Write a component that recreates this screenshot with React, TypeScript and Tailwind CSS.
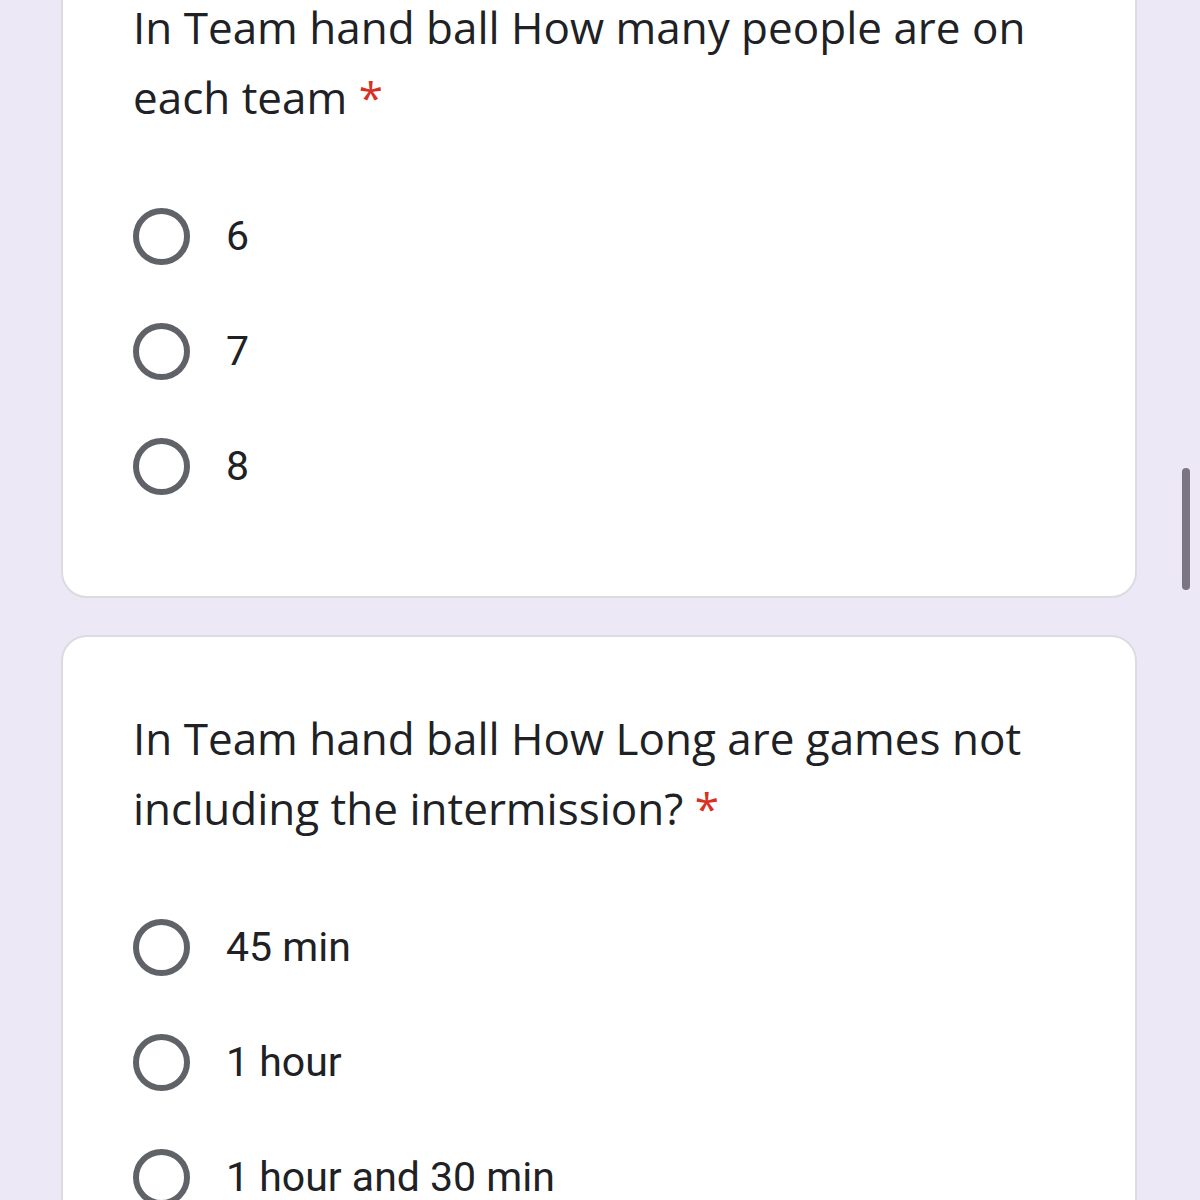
import React from "react";

interface Question {
  title: string;
  options: string[];
}

const questions: Question[] = [
  {
    title: "In Team hand ball How many people are on each team",
    options: ["6", "7", "8"],
  },
  {
    title: "In Team hand ball How Long are games not including the intermission?",
    options: ["45 min", "1 hour", "1 hour and 30 min"],
  },
];

function QuestionCard({ q, first }: { q: Question; first?: boolean }) {
  return (
    <div
      className={`w-[1076px] rounded-[26px] border-2 border-[#dadce0] bg-white pl-[70px] pr-[72px] pt-[66px] pb-[101px] ${
        first ? "mt-[-76px]" : "mt-[37px]"
      }`}
    >
      <div className="font-['Open_Sans',sans-serif] text-[44px] leading-[70px] text-[#202124]">
        {q.title}
        <span className="text-[#d93025]"> *</span>
      </div>
      <div className="mt-[76px] flex flex-col gap-[58px]">
        {q.options.map((opt) => (
          <div key={opt} className="flex items-center">
            <div className="h-[57px] w-[57px] shrink-0 rounded-full border-[6px] border-[#5f6368]" />
            <span className="ml-[36px] font-['Roboto',sans-serif] text-[41px] leading-[57px] text-[#202124]">
              {opt}
            </span>
          </div>
        ))}
      </div>
    </div>
  );
}

export default function App() {
  return (
    <div className="relative h-[1200px] w-[1200px] overflow-hidden bg-[#ece8f6]">
      <div className="pl-[61px]">
        {questions.map((q, i) => (
          <QuestionCard key={q.title} q={q} first={i === 0} />
        ))}
      </div>
      {/* scrollbar thumb */}
      <div className="absolute left-[1182px] top-[468px] h-[122px] w-[8px] rounded-full bg-[#7a7580]" />
    </div>
  );
}
